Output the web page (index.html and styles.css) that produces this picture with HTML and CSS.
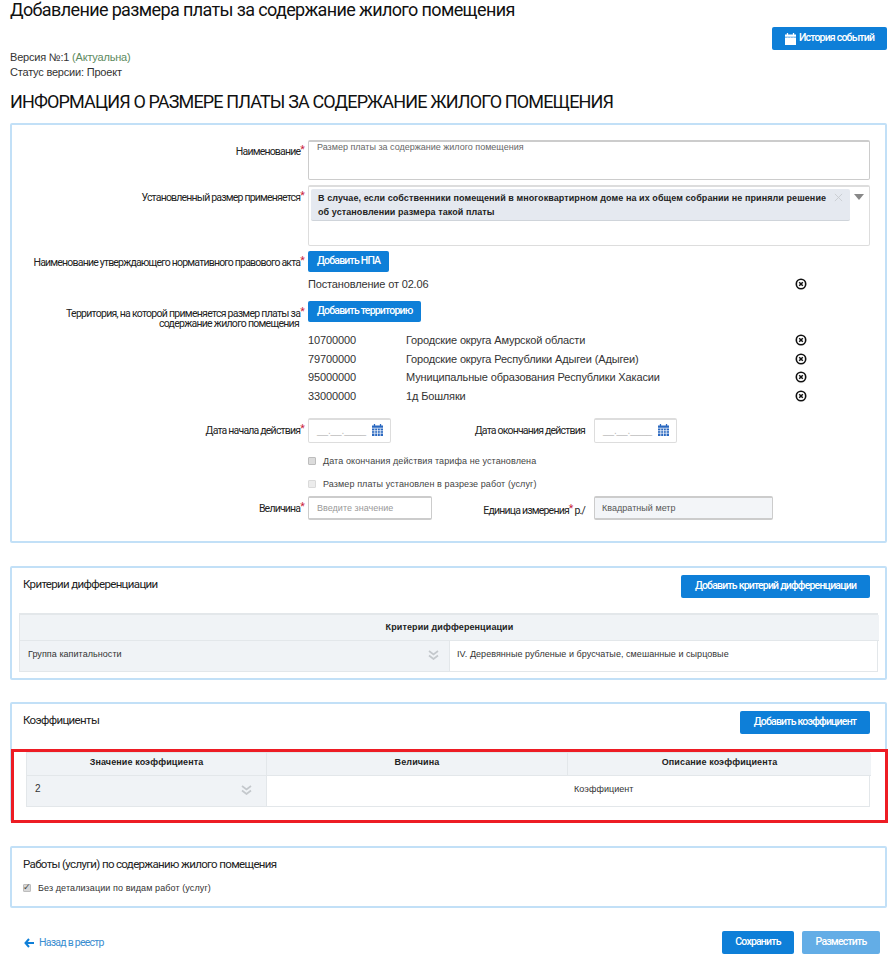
FILE: index.html
```html
<!DOCTYPE html>
<html lang="ru">
<head>
<meta charset="utf-8">
<title>Добавление размера платы</title>
<link rel="stylesheet" href="styles.css">
</head>
<body>
<svg class="defs" width="0" height="0" aria-hidden="true">
  <symbol id="cal" viewBox="0 0 12 13"><path fill="currentColor" d="M2 0h1.4v1.5H2zM8.600 0H10v1.500H8.600zM0 1.500h12V4H0zM0 4.800h12V13H0z"/><path stroke="#fff" stroke-width=".8" fill="none" d="M0 7.300h12M0 10h12M3 4.800V13M6 4.800V13M9 4.800V13"/></symbol>
  <symbol id="del" viewBox="0 0 12 12"><circle cx="6" cy="6" r="4.700" fill="none" stroke="#111" stroke-width="1.600"/><path d="M4.200 4.200l3.600 3.600M7.800 4.200l-3.600 3.600" stroke="#111" stroke-width="1.500"/></symbol>
  <symbol id="chev" viewBox="0 0 11 10"><path d="M1 1l4.500 3.500L10 1M1 5.500L5.500 9 10 5.500" fill="none" stroke="#c4c8cc" stroke-width="1.700"/></symbol>
</svg>
<header class="top">
  <h1 class="title">Добавление размера платы за содержание жилого помещения</h1>
  <button class="btn btn-history" type="button"><svg class="ic-cal-w"><use href="#cal"/></svg>История событий</button>
</header>
<div class="meta">
  <div>Версия №:1 <span class="actual">(Актуальна)</span></div>
  <div>Статус версии: Проект</div>
</div>
<h2 class="section">Информация о размере платы за содержание жилого помещения</h2>

<section class="panel panel-main">
  <div class="row row-name">
    <div class="lab">Наименование<i>*</i></div>
    <div class="field textarea">Размер платы за содержание жилого помещения</div>
  </div>
  <div class="row row-select">
    <div class="lab">Установленный размер применяется<i>*</i></div>
    <div class="field select">
      <div class="tag"><span>В случае, если собственники помещений в многоквартирном доме на их общем собрании не приняли решение об установлении размера такой платы</span>
        <svg class="tag-x" viewBox="0 0 10 10"><path d="M1 1l8 8M9 1l-8 8" stroke="#c8ccd0" stroke-width="1"/></svg>
      </div>
      <b class="caret"></b>
    </div>
  </div>
  <div class="row row-npa">
    <div class="lab">Наименование утверждающего нормативного правового акта<i>*</i></div>
    <button class="btn" type="button">Добавить НПА</button>
  </div>
  <div class="item item-npa"><span>Постановление от 02.06</span><svg class="del"><use href="#del"/></svg></div>
  <div class="row row-terr">
    <div class="lab lab-two">Территория, на которой применяется размер платы за<i>*</i><br><span class="lab-tail">содержание жилого помещения</span></div>
    <button class="btn" type="button">Добавить территорию</button>
  </div>
  <div class="list">
    <div class="item"><span class="code">10700000</span><span>Городские округа Амурской области</span><svg class="del"><use href="#del"/></svg></div>
    <div class="item"><span class="code">79700000</span><span>Городские округа Республики Адыгеи (Адыгеи)</span><svg class="del"><use href="#del"/></svg></div>
    <div class="item"><span class="code">95000000</span><span>Муниципальные образования Республики Хакасии</span><svg class="del"><use href="#del"/></svg></div>
    <div class="item"><span class="code">33000000</span><span>1д Бошляки</span><svg class="del"><use href="#del"/></svg></div>
  </div>
  <div class="row row-dates">
    <div class="lab">Дата начала действия<i>*</i></div>
    <div class="date"><span class="mask">__.__.____</span><svg class="ic-cal"><use href="#cal"/></svg></div>
    <div class="lab lab-end">Дата окончания действия</div>
    <div class="date"><span class="mask">__.__.____</span><svg class="ic-cal"><use href="#cal"/></svg></div>
  </div>
  <label class="check check-1"><input type="checkbox"><span>Дата окончания действия тарифа не установлена</span></label>
  <label class="check check-2"><input type="checkbox" disabled><span>Размер платы установлен в разрезе работ (услуг)</span></label>
  <div class="row row-value">
    <div class="lab">Величина<i>*</i></div>
    <div class="input placeholder">Введите значение</div>
    <div class="lab lab-unit">Единица измерения<i>*</i> р./</div>
    <div class="input readonly">Квадратный метр</div>
  </div>
</section>

<section class="panel panel-crit">
  <div class="panel-head">
    <h3>Критерии дифференциации</h3>
    <button class="btn btn-lg btn-crit" type="button">Добавить критерий дифференциации</button>
  </div>
  <div class="tbl tbl-crit">
    <div class="th span">Критерии дифференциации</div>
    <div class="td grey">Группа капитальности<svg class="chev"><use href="#chev"/></svg></div>
    <div class="td td-iv">IV. Деревянные рубленые и брусчатые, смешанные и сырцовые</div>
  </div>
</section>

<section class="panel panel-coef">
  <div class="panel-head">
    <h3>Коэффициенты</h3>
    <button class="btn btn-lg btn-coef" type="button">Добавить коэффициент</button>
  </div>
  <div class="tbl tbl-coef">
    <div class="th">Значение коэффициента</div>
    <div class="th">Величина</div>
    <div class="th">Описание коэффициента</div>
    <div class="td grey val">2<svg class="chev"><use href="#chev"/></svg></div>
    <div class="td wide">Коэффициент</div>
  </div>
  <div class="redbox"></div>
</section>

<section class="panel panel-works">
  <h3>Работы (услуги) по содержанию жилого помещения</h3>
  <label class="check check-w"><input type="checkbox" checked disabled><span>Без детализации по видам работ (услуг)</span></label>
</section>

<footer class="foot">
  <a class="back" href="#"><svg class="arrow" viewBox="0 0 10 10"><path d="M5 1L1.500 5 5 9M2 5h8" fill="none" stroke="#0e7fd8" stroke-width="2"/></svg>Назад в реестр</a>
  <div class="foot-btns">
    <button class="btn btn-lg btn-save" type="button">Сохранить</button>
    <button class="btn btn-lg btn-place" type="button">Разместить</button>
  </div>
</footer>
</body>
</html>
```
FILE: styles.css
```css
* { box-sizing: border-box; }
html, body { margin: 0; background: #fff; }
body { width: 893px; height: 965px; overflow: hidden; padding-left: 10px; padding-right: 6px; font-family: "Liberation Sans", Arial, sans-serif; color: #222; font-size: 11px; }
.defs { position: absolute; }

.top { display: flex; justify-content: space-between; height: 50px; }
.title { margin: 0; font: 400 18px/20px Roboto, sans-serif; color: #111; letter-spacing: -.63px; }
.btn { border: 0; border-radius: 2px; background: #0e7fd8; color: #fff; font: 500 10.500px/1 Roboto, sans-serif; letter-spacing: -.8px; height: 21px; padding: 0 9px; white-space: nowrap; }
.btn-history { width: 115px; height: 23px; margin-top: 27px; display: flex; align-items: center; justify-content: center; gap: 3px; }
.ic-cal-w { width: 11px; height: 12px; color: #fff; flex: none; }

.meta { font-size: 11px; line-height: 15px; color: #333; letter-spacing: -.2px; }
.actual { color: #5d8a60; }
.section { margin: 10px 0 0; font: 400 18px/24px Roboto, sans-serif; text-transform: uppercase; color: #111; height: 27px; letter-spacing: -.86px; }

.panel { position: relative; width: 877px; border: 2px solid #c2e0f7; border-radius: 2px; }
.panel-main { height: 420px; margin-top: 6px; padding-top: 15px; }
.row { display: flex; align-items: flex-start; }
.lab { width: 296px; flex: none; padding-right: 4px; text-align: right; font: 400 10.500px/12px Roboto, sans-serif; letter-spacing: -.8px; color: #222; }
.lab i { color: #c8213a; font-style: normal; position: relative; top: -2px; }
.lab-two { line-height: 10px; padding-top: 8px; letter-spacing: -.72px; }
.lab-tail { padding-right: 5px; }
.field { width: 562px; border: 1px solid #ddd; border-radius: 2px; }

.row-name { height: 45px; }
.row-name .lab { padding-top: 6px; }
.textarea { height: 40px; border: 2px solid #ccc; border-width: 2px 1px 1px; padding: 0 8px; font-size: 9px; line-height: 10px; color: #666; }
.row-select { height: 66px; }
.row-select .lab { padding-top: 7px; }
.select { position: relative; height: 61px; border-top-width: 2px; padding: 2px; }
.tag { position: relative; width: 539px; height: 32px; background: #e5e9f0; border-bottom: 1px solid #cfd4da; border-radius: 2px; padding: 2px 14px 0 7px; font: 700 9px/14px "Liberation Sans", sans-serif; color: #222; letter-spacing: .08px; }
.tag-x { position: absolute; right: 7px; top: 4px; width: 9px; height: 9px; }
.caret { position: absolute; right: 5px; top: 7px; border: 5px solid transparent; border-top: 6px solid #888; border-bottom: 0; }
.row-npa { height: 21px; }
.row-npa .lab { padding-top: 6px; }
.item { display: flex; align-items: center; font-size: 11px; color: #333; margin-left: 296px; position: relative; height: 18.500px; letter-spacing: -.15px; }
.item-npa { margin-top: 3px; height: 18px; margin-bottom: 8px; }
.del { position: absolute; left: 487px; top: 3px; width: 12px; height: 12px; }
.code { width: 98px; letter-spacing: -.1px; }
.row-terr { height: 21px; }
.list { margin-top: 9px; height: 87px; }
.row-dates { height: 25px; }
.row-dates .lab { padding-top: 7px; }
.date { width: 83px; height: 25px; border: 1px solid #ddd; border-top-width: 2px; border-radius: 2px; display: flex; justify-content: space-between; padding: 4px 7px 0 8px; }
.mask { color: #bbb; font-size: 10px; line-height: 13px; letter-spacing: -.1px; }
.ic-cal { width: 11px; height: 12px; color: #2a68c0; }
.lab-end { width: 203px; padding-right: 9px; }
.check { display: flex; align-items: center; margin-left: 296px; font-size: 9px; color: #444; letter-spacing: .1px; height: 14px; }
.check input { appearance: none; position: relative; margin: 0 7px 0 0; width: 8px; height: 8px; border: 1px solid #bdbdbd; border-radius: 1px; background: #dcdcdc; }
.check input:disabled { background: #ececec; border-color: #dadada; }
.check input:checked { background: #d8d8d8; border-color: #bdbdbd; }
.check input:checked::after { content: "✓"; position: absolute; left: -1px; top: -3px; font: 700 9px/11px "DejaVu Sans", sans-serif; color: #444; }
.check-1 { margin-top: 11px; }
.check-2 { margin-top: 9px; }
.row-value { margin-top: 5px; }
.row-value .lab { padding-top: 7px; }
.input { height: 24px; border: 1px solid #ccc; border-width: 2px 1px; border-radius: 2px; padding: 5px 8px; font-size: 9px; line-height: 11px; letter-spacing: .03px; }
.placeholder { width: 124px; color: #999; }
.readonly { width: 179px; background: #f3f5f8; color: #555; padding-left: 7px; }
.row-value .lab-unit { width: 162px; padding-right: 9px; padding-top: 9px; }

.panel-head { display: flex; justify-content: space-between; height: 36px; padding: 7px 15px 0 11px; }
h3 { margin: 0; font: 400 11.500px/14px Roboto, sans-serif; letter-spacing: -.65px; color: #222; }
.panel-head h3 { padding-top: 2px; }
.btn-lg { height: 23px; }
.panel-crit { height: 114px; margin-top: 23px; }
.btn-crit { width: 189px; }
.tbl { display: grid; font-size: 9px; color: #333; letter-spacing: .05px; }
.tbl-crit { margin: 9px 7px 0 7px; grid-template-columns: 430px 429px; border: 1px solid #e3e7ea; border-top-width: 2px; width: 859px; }
.th { background: #f0f3f6; font-weight: 700; text-align: center; color: #222; height: 26px; line-height: 24px; border-bottom: 1px solid #e3e7ea; letter-spacing: .1px; }
.span { grid-column: 1 / 3; }
.td { position: relative; height: 30px; line-height: 26px; padding-left: 8px; }
.td-iv { padding-left: 7px; }
.grey { background: #f0f3f6; border-right: 1px solid #e3e7ea; }
.chev { position: absolute; right: 10px; top: 9px; width: 11px; height: 10px; }

.panel-coef { height: 120px; margin-top: 22px; }
.btn-coef { width: 130px; }
.tbl-coef { margin: 12px 0 0 14px; width: 844px; grid-template-columns: 240px 301px 303px; border: 1px solid #e3e7ea; }
.tbl-coef .th { height: 23px; line-height: 19px; border-right: 1px solid #e3e7ea; }
.tbl-coef .th:nth-child(3) { border-right: 0; }
.val { height: 30px; font-size: 10px; }
.val .chev { right: 14px; }
.wide { grid-column: 2 / 4; padding-left: 307px; }
.redbox { position: absolute; left: -1px; top: 45px; width: 877px; height: 74px; border: 3px solid #ed1c24; }

.panel-works { height: 62px; margin-top: 24px; padding: 9px 11px 0; }
.check-w { margin: 10px 0 0; color: #333; }

.foot { display: flex; justify-content: space-between; height: 23px; margin-top: 23px; padding-left: 14px; padding-right: 7px; }
.back { display: flex; align-items: center; gap: 5px; color: #3a8dd0; text-decoration: none; font: 400 10.500px Roboto, sans-serif; letter-spacing: -.75px; height: 23px; }
.arrow { width: 10px; height: 10px; }
.foot-btns { display: flex; gap: 8px; }
.btn-save { width: 72px; }
.btn-place { width: 78px; background: #63ade6; }
```
